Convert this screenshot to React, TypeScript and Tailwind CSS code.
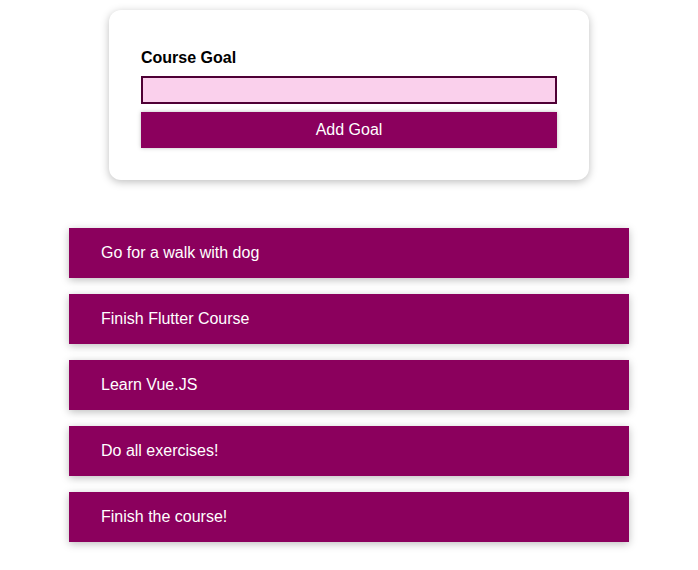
const GOALS = [
  'Go for a walk with dog',
  'Finish Flutter Course',
  'Learn Vue.JS',
  'Do all exercises!',
  'Finish the course!',
]

export default function App() {
  return (
    <div className="min-h-screen bg-white pt-[10px] font-['Liberation_Sans',Arial,sans-serif]">
      <section className="mx-auto w-[480px] rounded-xl bg-white p-8 shadow-[0_2px_8px_rgba(0,0,0,0.26)]">
        <label className="mb-[6px] mt-1 block text-base font-bold leading-6 text-black">Course Goal</label>
        <input
          type="text"
          className="block h-[28px] w-full border-2 border-[#4f0035] bg-[#fad0ec] px-1 outline-none"
        />
        <button className="mt-2 block h-9 w-full bg-[#8b005d] text-base text-white shadow-[0_0_4px_rgba(0,0,0,0.26)]">
          Add Goal
        </button>
      </section>
      <ul className="mx-auto mt-12 flex w-[560px] flex-col gap-4">
        {GOALS.map((g) => (
          <li
            key={g}
            className="flex h-[50px] items-center bg-[#8b005d] px-8 text-base text-white shadow-[0_2px_8px_rgba(0,0,0,0.26)]"
          >
            {g}
          </li>
        ))}
      </ul>
    </div>
  )
}
